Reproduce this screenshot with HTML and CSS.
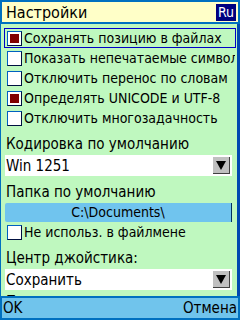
FILE: index.html
```html
<!DOCTYPE html>
<html lang="ru">
<head>
    <meta charset="UTF-8">
    <meta name="viewport" content="width=device-width, initial-scale=1.0">
    <title>Настройки</title>
    <link rel="stylesheet" href="styles.css">
</head>
<body>

<div class="screen">
    <header class="title-bar">
        <span class="title">Настройки</span>
        <span class="lang">Ru</span>
    </header>

    <div class="content">
        <div class="options">
            <div class="check-row focused"><span class="box checked"></span><span class="text">Сохранять позицию в файлах</span></div>
            <div class="check-row"><span class="box"></span><span class="text">Показать непечатаемые символы</span></div>
            <div class="check-row"><span class="box"></span><span class="text">Отключить перенос по словам</span></div>
            <div class="check-row"><span class="box checked"></span><span class="text">Определять UNICODE и UTF-8</span></div>
            <div class="check-row"><span class="box"></span><span class="text">Отключить многозадачность</span></div>

            <div class="label">Кодировка по умолчанию</div>
            <div class="select"><span class="text">Win 1251</span><span class="arrow"></span></div>

            <div class="label">Папка по умолчанию</div>
            <div class="field">C:\Documents\</div>
            <div class="check-row"><span class="box"></span><span class="text">Не использ. в файлмене</span></div>

            <div class="label">Центр джойстика:</div>
            <div class="select"><span class="text">Сохранить</span><span class="arrow"></span></div>

            <div class="label last">Перевод строки</div>
        </div>
        <div class="scrollbar"></div>
    </div>

    <footer class="soft-keys">
        <span>OK</span>
        <span>Отмена</span>
    </footer>
</div>

</body>
</html>
```

FILE: styles.css
```css
* {
    margin: 0;
    padding: 0;
    box-sizing: border-box;
}

body {
    font-family: 'DejaVu Sans Condensed', 'DejaVu Sans', sans-serif;
    font-size: 14px;
    color: #000;
    background-color: #bff8bf;
}

.screen {
    width: 240px;
    height: 320px;
    display: flex;
    flex-direction: column;
    overflow: hidden;
}

.title-bar {
    height: 24px;
    flex-shrink: 0;
    background-color: #ffffc8;
    border: 2px solid #0070c0;
    display: flex;
    justify-content: space-between;
    align-items: center;
    padding: 0 2px 0 4px;
    font-size: 16px;
}

.lang {
    background-color: #000080;
    color: white;
    font-size: 14px;
    line-height: 17px;
    padding: 0 2px;
}

.content {
    flex: 1;
    display: flex;
    overflow: hidden;
    border-left: 1px solid #0070c0;
}

.options {
    flex: 1;
    padding: 4px 1px 0 3px;
    overflow: hidden;
    white-space: nowrap;
}

.scrollbar {
    width: 3px;
    background-color: #0048b0;
}

.check-row {
    height: 20px;
    display: flex;
    align-items: center;
    gap: 2px;
    padding-left: 2px;
    border: 1px solid transparent;
    overflow: hidden;
}

.check-row.focused {
    border-color: #0000c8;
}

.box {
    width: 15px;
    height: 15px;
    flex-shrink: 0;
    background-color: white;
    border: 1px solid #0060c0;
    border-right-color: #001040;
    border-bottom-color: #001040;
    position: relative;
}

.box.checked::after {
    content: "";
    position: absolute;
    left: 2px;
    top: 2px;
    right: 2px;
    bottom: 2px;
    background-color: #800000;
}

.label {
    height: 20px;
    line-height: 20px;
    margin-top: 6px;
    padding-left: 2px;
    font-size: 15px;
}

.label.last {
    margin-top: 2px;
}

.select {
    height: 21px;
    margin: 1px 4px 2px 1px;
    background-color: white;
    display: flex;
    align-items: center;
    justify-content: space-between;
    padding: 0 2px 0 1px;
    font-size: 15px;
}

.arrow {
    width: 17px;
    height: 17px;
    background-color: #c0c0c0;
    border-right: 1px solid #404040;
    border-bottom: 1px solid #404040;
    position: relative;
}

.arrow::after {
    content: "";
    position: absolute;
    left: 3px;
    top: 4px;
    border-left: 5px solid transparent;
    border-right: 5px solid transparent;
    border-top: 9px solid #000;
}

.field {
    height: 19px;
    margin: 1px 4px 0 1px;
    background-color: #70c4ee;
    border-right: 1px solid #003060;
    border-radius: 2px 0 0 2px;
    text-align: center;
    line-height: 19px;
}

.soft-keys {
    height: 24px;
    flex-shrink: 0;
    background-color: #70c4ec;
    border: 2px solid #0070c0;
    display: flex;
    justify-content: space-between;
    align-items: center;
    padding: 0 1px;
    font-size: 15px;
}
```
